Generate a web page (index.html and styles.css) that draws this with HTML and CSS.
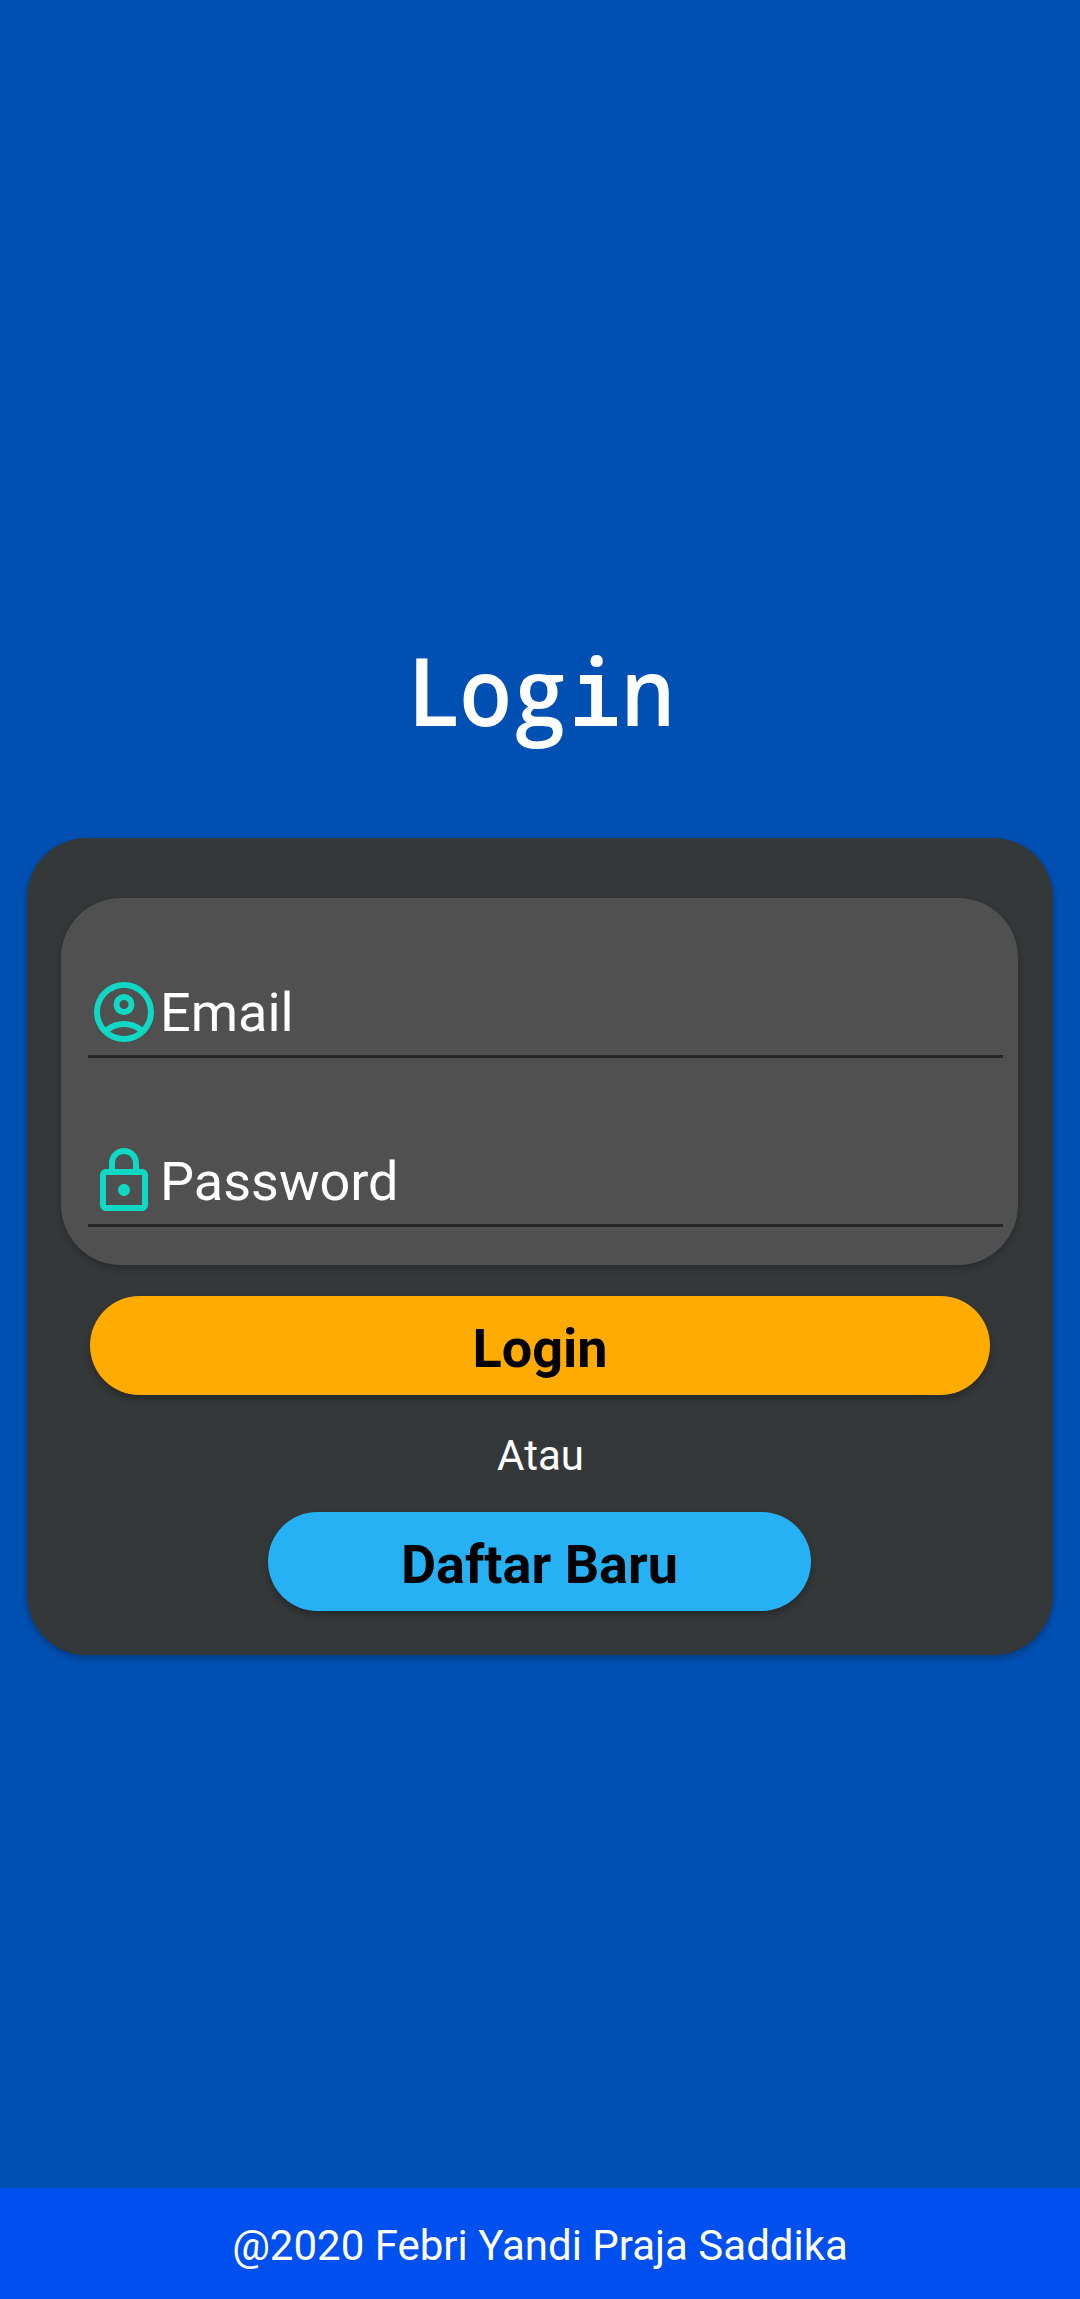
FILE: index.html
```html
<!DOCTYPE html>
<html lang="id">
<head>
<meta charset="utf-8">
<title>Login</title>
<link rel="stylesheet" href="styles.css">
</head>
<body>
<main class="screen">
  <h1 class="title"><span class="l">L</span><span class="o">o</span><span class="g">g</span><span class="slab">i</span><span class="n">n</span></h1>
  <section class="card">
    <div class="fields">
      <div class="field">
        <svg class="icon" viewBox="0 0 24 24"><path fill-rule="evenodd" d="M12 2a10 10 0 1 0 0 20 10 10 0 0 0 0-20zM7.35 18.5C8.66 17.56 10.26 17 12 17s3.34.56 4.65 1.5C15.34 19.44 13.74 20 12 20s-3.34-.56-4.65-1.5zm10.79-1.38a9.947 9.947 0 0 0-12.28 0A7.96 7.96 0 0 1 4 12c0-4.42 3.58-8 8-8s8 3.58 8 8c0 1.950-.7 3.730-1.860 5.120z"/><path fill-rule="evenodd" d="M12 6a3.5 3.5 0 1 0 0 7 3.5 3.5 0 0 0 0-7zm0 5a1.5 1.5 0 1 1 0-3 1.5 1.5 0 0 1 0 3z"/></svg>
        <span>Email</span>
      </div>
      <div class="field">
        <svg class="icon" viewBox="0 0 24 24"><path fill-rule="evenodd" d="M18 8h-1V6c0-2.76-2.24-5-5-5S7 3.240 7 6v2H6c-1.100 0-2 .9-2 2v10c0 1.100.9 2 2 2h12c1.100 0 2-.9 2-2V10c0-1.100-.9-2-2-2zM9 6c0-1.660 1.340-3 3-3s3 1.340 3 3v2H9V6zm9 14H6V10h12v10zm-6-3c1.100 0 2-.9 2-2s-.9-2-2-2-2 .9-2 2 .9 2 2 2z"/></svg>
        <span>Password</span>
      </div>
    </div>
    <button class="button login">Login</button>
    <p class="or">Atau</p>
    <button class="button register">Daftar Baru</button>
  </section>
  <footer class="footer">@2020 Febri Yandi Praja Saddika</footer>
</main>
</body>
</html>
```
FILE: styles.css
```css
* { box-sizing: border-box; }
body { margin: 0; font-family: Roboto, sans-serif; color: #fff; }
.screen {
  height: 2299px;
  padding-top: 630px;
  background: #0050b3;
  display: flex;
  flex-direction: column;
  align-items: center;
}
/* Monospaced heading: five equal cells, with slab serifs on the i */
.title {
  margin: 0;
  height: 208px;
  display: grid;
  grid-template-columns: repeat(5, 54px);
  justify-items: center;
  font: 600 94px/120px "Open Sans", sans-serif;
}
.title span { height: 124px; }
.l { padding-left: 2px; }
.o, .n { transform: scaleX(.92); }
.g { transform: scaleX(.94); }
.slab { position: relative; width: 54px; text-align: center; padding-left: 5px; }
.slab::before,
.slab::after { content: ""; position: absolute; background: #fff; height: 9px; }
.slab::before { left: 13px; top: 45px; width: 14px; }
.slab::after { left: 8px; top: 87px; width: 42px; }
.card {
  width: 1026px;
  height: 817px;
  padding: 60px 35px 0 34px;
  border-radius: 60px;
  background: #353839;
  box-shadow: 0 3px 7px rgba(0, 0, 0, .3);
  display: flex;
  flex-direction: column;
  align-items: center;
}
.fields {
  width: 957px;
  height: 367px;
  padding: 51px 15px 0 27px;
  border-radius: 60px;
  background: #505050;
  box-shadow: 0 3px 7px rgba(0, 0, 0, .25);
}
.field {
  height: 109px;
  margin-bottom: 60px;
  border-bottom: 3px solid #272727;
  display: flex;
  align-items: center;
  padding-top: 20px;
  font-size: 54px;
}
.icon { width: 72px; height: 72px; fill: #0fd8c4; }
.button {
  height: 99px;
  padding: 6px 0 0;
  border: 0;
  border-radius: 50px;
  font: 700 54px/93px Roboto, sans-serif;
  color: #000;
  box-shadow: 0 4px 7px rgba(0, 0, 0, .3);
}
.login { width: 900px; margin: 31px 0 0 1px; background: #ffab00; }
.or { margin: 0 0 0 2px; height: 117px; font-size: 42px; line-height: 121px; }
.register { width: 543px; background: #26b1f4; }
.footer {
  width: 100%;
  height: 111px;
  margin-top: auto;
  background: #0050f0;
  text-align: center;
  font-size: 42px;
  line-height: 115px;
}
```
